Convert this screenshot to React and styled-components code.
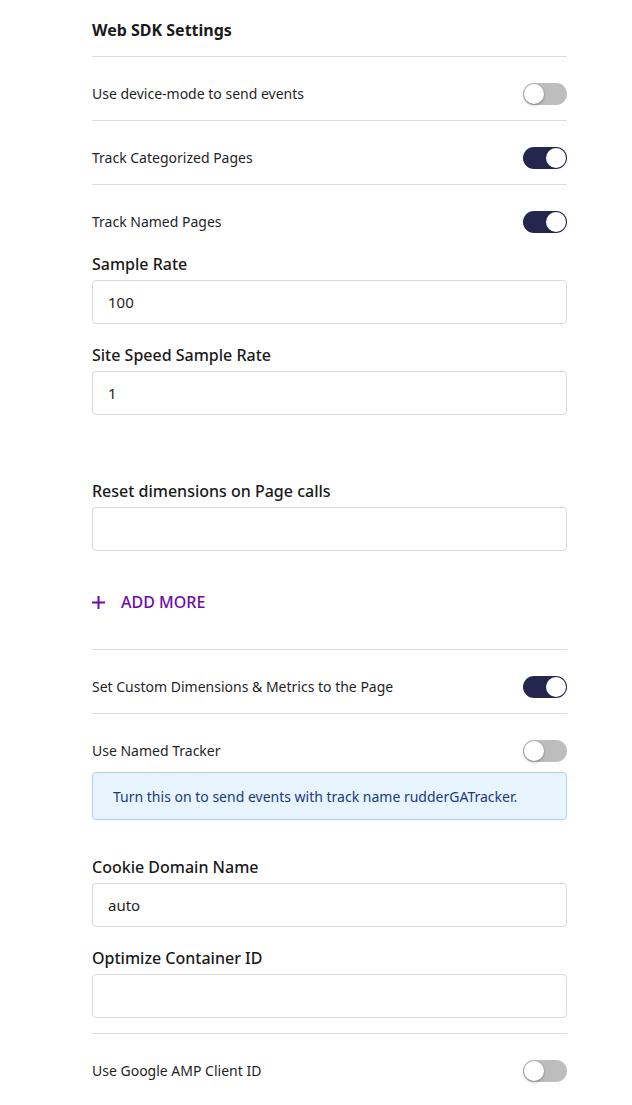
import React, { useState } from "react";
import styled, { createGlobalStyle } from "styled-components";

const GlobalStyle = createGlobalStyle`
  body {
    margin: 0;
    background: #fff;
    font-family: "Noto Sans", "Open Sans", sans-serif;
    color: #1f1f1f;
  }
`;

const Toggle = ({ on, onChange }) => (
  <Track $on={on} onClick={onChange}>
    <Knob $on={on} />
  </Track>
);

const ToggleRow = ({ label, on, onChange, last }) => (
  <Row $last={last}>
    <RowLabel>{label}</RowLabel>
    <Toggle on={on} onChange={onChange} />
  </Row>
);

const Field = ({ label, value, top }) => (
  <FieldGroup $top={top}>
    <FieldLabel>{label}</FieldLabel>
    <Input defaultValue={value} />
  </FieldGroup>
);

const App = () => {
  const [flags, setFlags] = useState({
    deviceMode: false,
    categorized: true,
    named: true,
    custom: true,
    tracker: false,
    amp: false,
  });
  const flip = (k) => () => setFlags((f) => ({ ...f, [k]: !f[k] }));

  return (
    <Page>
      <GlobalStyle />
      <Title>Web SDK Settings</Title>
      <ToggleRow label="Use device-mode to send events" on={flags.deviceMode} onChange={flip("deviceMode")} />
      <ToggleRow label="Track Categorized Pages" on={flags.categorized} onChange={flip("categorized")} />
      <ToggleRow label="Track Named Pages" on={flags.named} onChange={flip("named")} last />

      <Field label="Sample Rate" value="100" top={20} />
      <Field label="Site Speed Sample Rate" value="1" top={20} />
      <Field label="Reset dimensions on Page calls" value="" top={65} />

      <AddMore>
        <svg width="13" height="13" viewBox="0 0 13 13">
          <path d="M6.5 0v13M0 6.5h13" stroke="currentColor" strokeWidth="2" />
        </svg>
        <span>ADD MORE</span>
      </AddMore>

      <Divider />
      <ToggleRow label="Set Custom Dimensions & Metrics to the Page" on={flags.custom} onChange={flip("custom")} />
      <ToggleRow label="Use Named Tracker" on={flags.tracker} onChange={flip("tracker")} last />
      <Notice>Turn this on to send events with track name rudderGATracker.</Notice>

      <Field label="Cookie Domain Name" value="auto" top={36} />
      <Field label="Optimize Container ID" value="" top={20} />

      <Divider $top={15} />
      <ToggleRow label="Use Google AMP Client ID" on={flags.amp} onChange={flip("amp")} last />
    </Page>
  );
};

const Page = styled.div`
  width: 475px;
  margin-left: 92px;
  padding-bottom: 40px;
`;

const Title = styled.h2`
  margin: 0;
  padding: 19px 0 15px;
  font-size: 16px;
  line-height: 22px;
  font-weight: 700;
  color: #1a1a1a;
  border-bottom: 1px solid #dedede;
`;

const Row = styled.div`
  display: flex;
  align-items: center;
  justify-content: space-between;
  padding: 26px 0 ${(p) => (p.$last ? "0" : "15px")};
  border-bottom: ${(p) => (p.$last ? "none" : "1px solid #dedede")};
`;

const RowLabel = styled.span`
  font-size: 14px;
  line-height: 22px;
  color: #1f1f1f;
`;

const Track = styled.div`
  position: relative;
  width: 44px;
  height: 22px;
  border-radius: 11px;
  background: ${(p) => (p.$on ? "#24264d" : "#bdbdbd")};
  cursor: pointer;
  flex-shrink: 0;
`;

const Knob = styled.div`
  position: absolute;
  top: 1px;
  left: ${(p) => (p.$on ? "23px" : "1px")};
  width: 20px;
  height: 20px;
  border-radius: 50%;
  background: #fff;
  box-shadow: ${(p) =>
    p.$on ? "none" : "0 1px 3px rgba(0, 0, 0, 0.35)"};
`;

const FieldGroup = styled.div`
  display: flex;
  flex-direction: column;
  margin-top: ${(p) => p.$top}px;
`;

const FieldLabel = styled.label`
  font-size: 16px;
  line-height: 22px;
  font-weight: 500;
  color: #1a1a1a;
  margin-bottom: 5px;
`;

const Input = styled.input`
  box-sizing: border-box;
  height: 44px;
  width: 100%;
  padding: 0 15px;
  border: 1px solid #d9d9d9;
  border-radius: 4px;
  font-family: inherit;
  font-size: 15px;
  color: #1f1f1f;
  outline: none;
`;

const AddMore = styled.button`
  display: flex;
  align-items: center;
  gap: 16px;
  margin-top: 40px;
  padding: 0;
  border: none;
  background: none;
  color: #6e0aa8;
  font-family: inherit;
  font-size: 16px;
  font-weight: 500;
  line-height: 22px;
  cursor: pointer;
`;

const Divider = styled.hr`
  margin: ${(p) => p.$top || 36}px 0 0;
  border: none;
  border-top: 1px solid #dedede;
`;

const Notice = styled.div`
  box-sizing: border-box;
  margin-top: 10px;
  height: 48px;
  display: flex;
  align-items: center;
  padding: 0 20px;
  background: #e8f4ff;
  border: 1px solid #abd0f5;
  border-radius: 4px;
  font-size: 14px;
  color: #183b7a;
`;

export default App;
